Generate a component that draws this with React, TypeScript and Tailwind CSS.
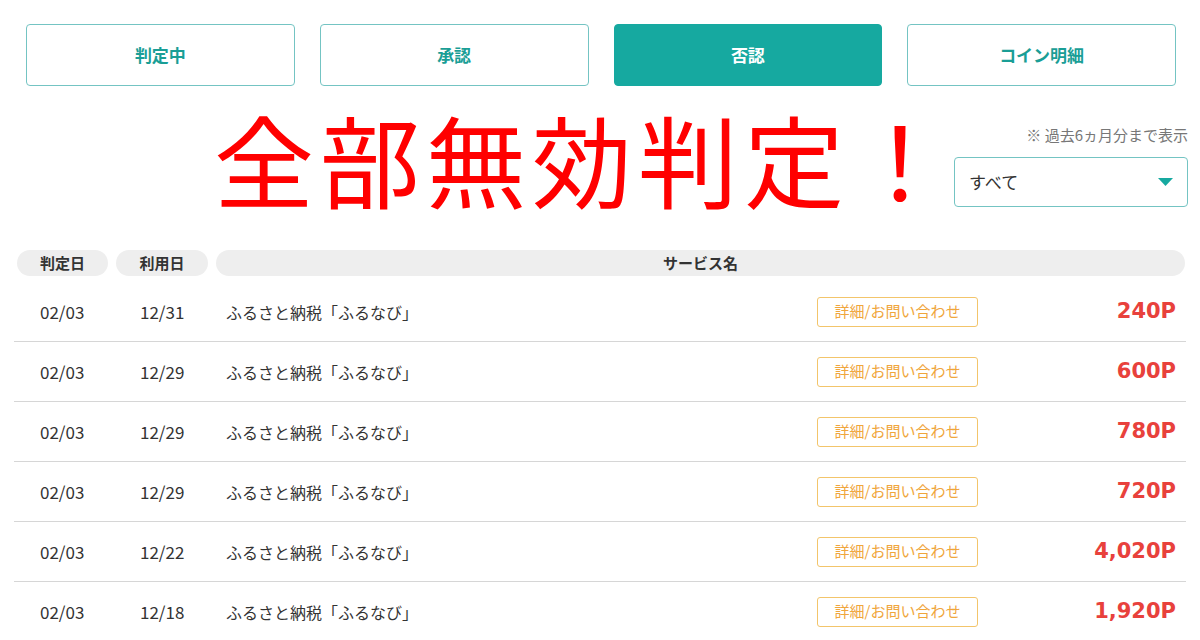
const tabs = [
  { label: '判定中', active: false },
  { label: '承認', active: false },
  { label: '否認', active: true },
  { label: 'コイン明細', active: false },
];

const rows = [
  { judged: '02/03', used: '12/31', points: '240P' },
  { judged: '02/03', used: '12/29', points: '600P' },
  { judged: '02/03', used: '12/29', points: '780P' },
  { judged: '02/03', used: '12/29', points: '720P' },
  { judged: '02/03', used: '12/22', points: '4,020P' },
  { judged: '02/03', used: '12/18', points: '1,920P' },
];

const jp = "font-['Noto_Sans_CJK_JP',sans-serif]";

export default function App() {
  return (
    <div className={`w-[1200px] h-[640px] overflow-hidden bg-white text-[#333] ${jp}`}>
      {/* tabs */}
      <div className="flex gap-[25px] pl-[26px] pr-[24px] pt-[24px]">
        {tabs.map((t) => (
          <div
            key={t.label}
            className={`flex h-[62px] flex-1 items-center justify-center rounded-[4px] border text-[17px] font-bold ${
              t.active
                ? 'border-[#16a9a0] bg-[#16a9a0] text-white'
                : 'border-[#74c4c3] bg-white text-[#1a9e96]'
            }`}
          >
            {t.label}
          </div>
        ))}
      </div>

      {/* title + filter */}
      <div className="flex h-[164px] items-start">
        <div className="-mr-[20px] ml-[214px] mt-[22px] shrink-0 whitespace-nowrap text-[100px] leading-none tracking-[6px] text-[#ff0000]">
          全部無効判定！
        </div>
        <div className="ml-auto mr-[12px] mt-[38px] flex w-[234px] shrink-0 flex-col items-end">
          <div className="text-[15px] leading-[22px] text-[#777]">※ 過去6ヵ月分まで表示</div>
          <div className="mt-[11px] flex h-[50px] w-full items-center justify-between rounded-[4px] border border-[#74c4c3] pl-[14px] pr-[14px]">
            <span className="text-[17px] text-[#333]">すべて</span>
            <svg width="15" height="8" viewBox="0 0 15 8">
              <path d="M0 0 H15 L7.5 8 Z" fill="#16a9a0" />
            </svg>
          </div>
        </div>
      </div>

      {/* table */}
      <div className="mx-[14px]">
        <div className="flex h-[26px] gap-[8px] pl-[3px] pr-[1px] text-[15px] font-bold text-[#333]">
          <div className="flex w-[91px] items-center justify-center rounded-full bg-[#eeeeee]">判定日</div>
          <div className="flex w-[92px] items-center justify-center rounded-full bg-[#eeeeee]">利用日</div>
          <div className="flex flex-1 items-center justify-center rounded-full bg-[#eeeeee]">サービス名</div>
        </div>

        <div className="mt-[6px]">
          {rows.map((r, i) => (
            <div key={i} className="flex h-[60px] items-center border-b border-[#d6d6d6] text-[16px]">
              <div className="w-[126px] pl-[26px] text-[17px]">{r.judged}</div>
              <div className="w-[86px] text-[17px]">{r.used}</div>
              <div className="flex-1">ふるさと納税「ふるなび」</div>
              <div className="flex h-[30px] w-[161px] items-center justify-center rounded-[3px] border border-[#f3c56b] text-[15px] text-[#f0a63c]">
                詳細/お問い合わせ
              </div>
              <div className="w-[208px] pr-[10px] text-right font-['DejaVu_Sans',sans-serif] text-[21px] font-bold text-[#e8413c]">
                {r.points}
              </div>
            </div>
          ))}
        </div>
      </div>
    </div>
  );
}
